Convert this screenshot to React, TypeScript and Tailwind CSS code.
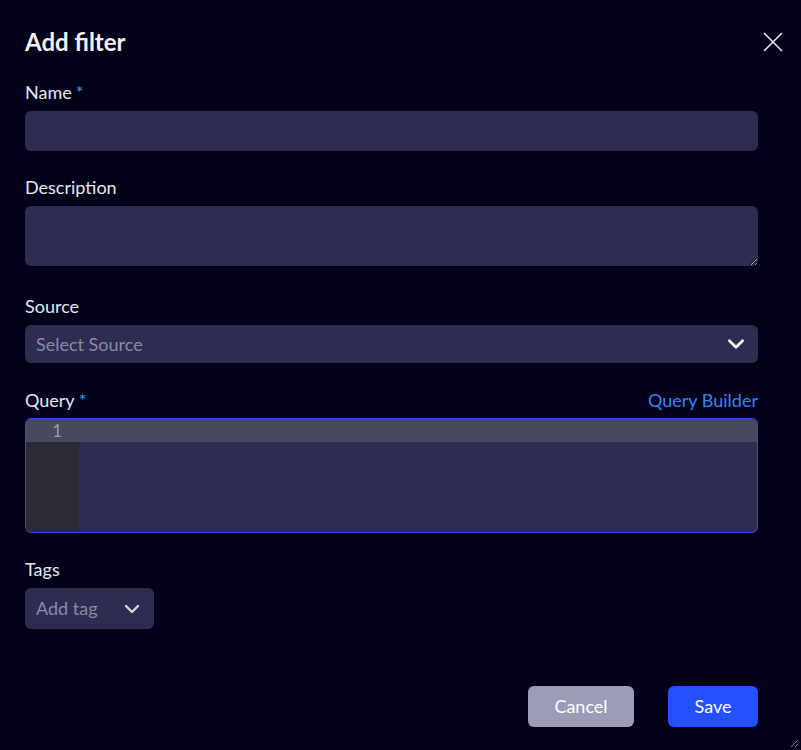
import { useState } from "react";

function Chevron({ className }: { className?: string }) {
  return (
    <svg viewBox="0 0 20 20" className={className} fill="none" stroke="currentColor" strokeWidth="2.4" strokeLinecap="round" strokeLinejoin="round">
      <path d="M4 7l6 6 6-6" />
    </svg>
  );
}

function Label({ text, required }: { text: string; required?: boolean }) {
  return (
    <label className="text-[18px] leading-[22px] text-[#e6e6ee]">
      {text}
      {required && <span className="ml-1 text-[#2ea6e2]">*</span>}
    </label>
  );
}

export default function App() {
  const [name, setName] = useState("");
  const [description, setDescription] = useState("");

  return (
    <div
      className="relative flex min-h-[750px] w-full flex-col bg-[#03021a] pl-[25px] pr-[43px] text-white"
      style={{ fontFamily: "Lato, 'Noto Sans', sans-serif" }}
    >
      <div className="flex items-center justify-between pt-[29px]">
        <h2 className="text-[24px] font-bold leading-[26px] text-[#f2f2f6]">Add filter</h2>
        <button className="-mr-[26px] text-[#e8e8ee]">
          <svg width="22" height="22" viewBox="0 0 22 22" stroke="currentColor" strokeWidth="1.6">
            <path d="M2 2l18 18M20 2L2 20" />
          </svg>
        </button>
      </div>

      <div className="mt-[26px] flex flex-col gap-[8px]">
        <Label text="Name" required />
        <input
          value={name}
          onChange={(e) => setName(e.target.value)}
          className="h-[40px] w-full rounded-[6px] bg-[#2d2d52] px-3 text-[18px] text-white outline-none"
        />
      </div>

      <div className="mt-[25px] flex flex-col gap-[8px]">
        <Label text="Description" />
        <textarea
          value={description}
          onChange={(e) => setDescription(e.target.value)}
          className="h-[60px] w-full rounded-[6px] bg-[#2d2d52] px-3 py-2 text-[18px] text-white outline-none"
        />
      </div>

      <div className="mt-[29px] flex flex-col gap-[8px]">
        <Label text="Source" />
        <div className="flex h-[38px] w-full items-center justify-between rounded-[6px] bg-[#2d2d52] pl-[11px] pr-[11px]">
          <span className="text-[18px] text-[#8a8aa6]">Select Source</span>
          <Chevron className="h-[22px] w-[22px] text-white" />
        </div>
      </div>

      <div className="mt-[26px] flex flex-col gap-[7px]">
        <div className="flex items-end justify-between">
          <Label text="Query" required />
          <a className="text-[18px] leading-[22px] text-[#2f86f0]">Query Builder</a>
        </div>
        <div className="flex h-[115px] w-full flex-col overflow-hidden rounded-[6px] border border-[#2447ff] bg-[#2d2d52]">
          <div className="flex h-[23px] shrink-0 bg-[#474a5c]">
            <div className="w-[53px] pr-[17px] text-right text-[17px] leading-[23px] text-[#9a9aa8]">1</div>
          </div>
          <div className="flex flex-1">
            <div className="w-[53px] bg-[#2a2b35]" />
          </div>
        </div>
      </div>

      <div className="mt-[25px] flex flex-col gap-[8px]">
        <Label text="Tags" />
        <div className="flex h-[41px] w-[129px] items-center justify-between rounded-[6px] bg-[#2d2d52] pl-[11px] pr-[12px]">
          <span className="text-[18px] text-[#8a8aa6]">Add tag</span>
          <Chevron className="h-[20px] w-[20px] text-[#d6d6e2]" />
        </div>
      </div>

      <div className="mt-[57px] flex justify-end gap-[34px]">
        <button className="h-[41px] w-[106px] rounded-[6px] bg-[#9a9cb8] text-[18px] text-white">Cancel</button>
        <button className="h-[41px] w-[90px] rounded-[6px] bg-[#2450ff] text-[18px] text-white">Save</button>
      </div>

      <svg className="absolute bottom-[2px] right-[2px]" width="9" height="9" viewBox="0 0 9 9" stroke="#7a7a8a" strokeWidth="1">
        <path d="M1 8L8 1M5 8L8 5" />
      </svg>
    </div>
  );
}
